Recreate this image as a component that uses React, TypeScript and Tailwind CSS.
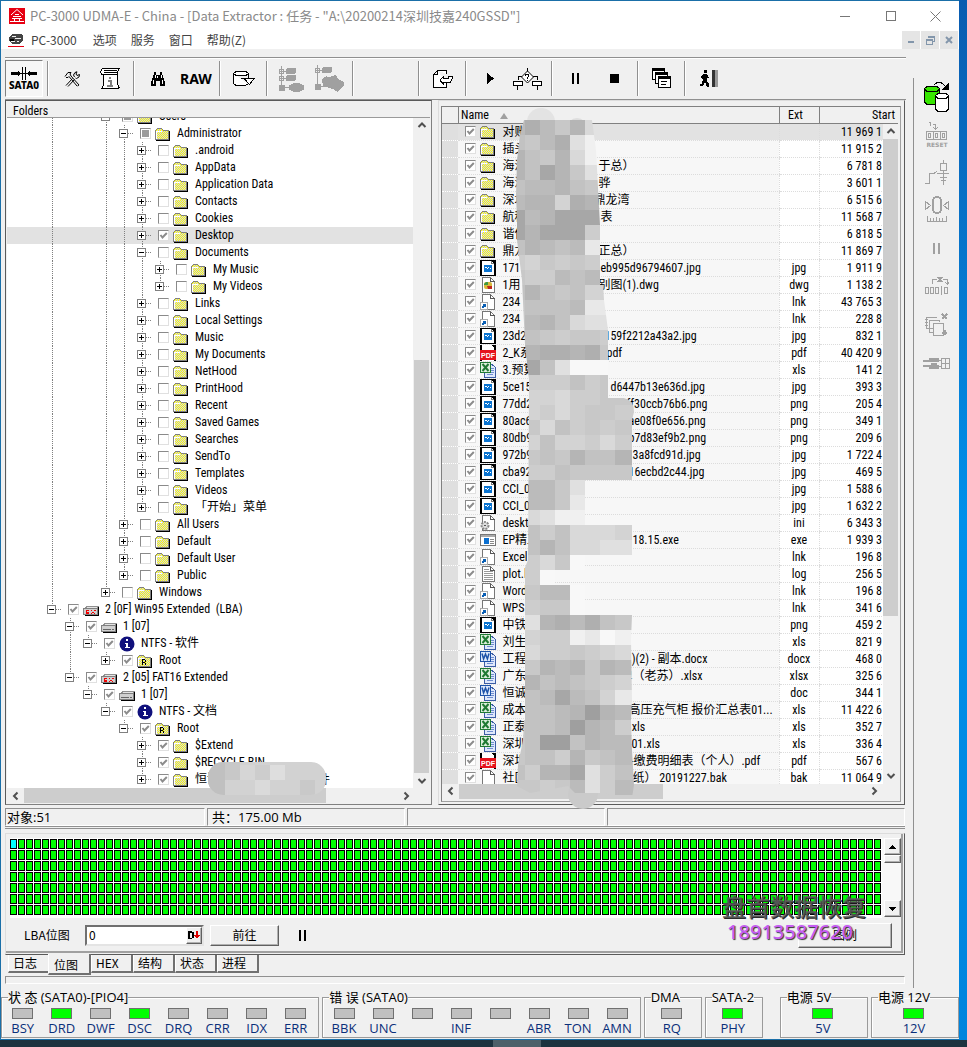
import React from 'react';
import clsx from 'clsx';

type TreeRow = { level: number; label: string; icon?: string; open?: boolean; check?: 'on' | 'mixed'; tail?: string };
type FileRow = { name: string; icon: string; ext?: string; start: string; tail?: string; lead?: number };

const listFont = "font-['Roboto_Condensed','Roboto','Noto_Sans_CJK_SC',sans-serif] text-xs";
const uiFont = "font-['Open_Sans','Noto_Sans_CJK_SC',sans-serif]";

const plain = (level: number, names: string[]): TreeRow[] => names.map((label) => ({ level, label }));

const tree: TreeRow[] = [
  { level: 3, label: 'Users', open: true, check: 'mixed' },
  { level: 4, label: 'Administrator', open: true, check: 'mixed' },
  ...plain(5, ['.android', 'AppData', 'Application Data', 'Contacts', 'Cookies']),
  { level: 5, label: 'Desktop', check: 'on' },
  { level: 5, label: 'Documents', open: true },
  ...plain(6, ['My Music', 'My Videos']),
  ...plain(5, ['Links', 'Local Settings', 'Music', 'My Documents', 'NetHood', 'PrintHood', 'Recent', 'Saved Games', 'Searches', 'SendTo', 'Templates', 'Videos', '「开始」菜单']),
  ...plain(4, ['All Users', 'Default', 'Default User', 'Public']),
  { level: 3, label: 'Windows' },
  { level: 0, label: '2 [0F] Win95 Extended  (LBA)', icon: 'ex', open: true, check: 'on' },
  { level: 1, label: '1 [07]', icon: 'drive', open: true, check: 'on' },
  { level: 2, label: 'NTFS - 软件', icon: 'info', open: true, check: 'on' },
  { level: 3, label: 'Root', icon: 'root', check: 'on' },
  { level: 1, label: '2 [05] FAT16 Extended', icon: 'ex', open: true, check: 'on' },
  { level: 2, label: '1 [07]', icon: 'drive', open: true, check: 'on' },
  { level: 3, label: 'NTFS - 文档', icon: 'info', open: true, check: 'on' },
  { level: 4, label: 'Root', icon: 'root', open: true, check: 'on' },
  { level: 5, label: '$Extend', check: 'on' },
  { level: 5, label: '$RECYCLE.BIN', check: 'on' },
  { level: 5, label: '恒诚', check: 'on', tail: '件' },
];

const files: FileRow[] = [
  { name: '对账', icon: 'folder', start: '11 969 1' },
  { name: '插头', icon: 'folder', start: '11 915 2' },
  { name: '海汇', icon: 'folder', start: '6 781 8', tail: '于总）', lead: 96 },
  { name: '海汇', icon: 'folder', start: '3 601 1', tail: '骅', lead: 96 },
  { name: '深圳', icon: 'folder', start: '6 515 6', tail: '鼎龙湾', lead: 91 },
  { name: '航科', icon: 'folder', start: '11 568 7', tail: '表', lead: 98 },
  { name: '谐信', icon: 'folder', start: '6 818 5' },
  { name: '鼎龙', icon: 'folder', start: '11 869 7', tail: '正总）', lead: 96 },
  { name: '171', icon: 'img', ext: 'jpg', start: '1 911 9', tail: 'eb995d96794607.jpg', lead: 98 },
  { name: '1用', icon: 'dwg', ext: 'dwg', start: '1 138 2', tail: '别图(1).dwg', lead: 96 },
  { name: '234', icon: 'lnk', ext: 'lnk', start: '43 765 3' },
  { name: '234', icon: 'lnk', ext: 'lnk', start: '228 8' },
  { name: '23d2', icon: 'img', ext: 'jpg', start: '832 1', tail: '159f2212a43a2.jpg', lead: 102 },
  { name: '2_K系', icon: 'pdf', ext: 'pdf', start: '40 420 9', tail: 'pdf', lead: 104 },
  { name: '3.预算', icon: 'xls', ext: 'xls', start: '141 2' },
  { name: '5ce15', icon: 'img', ext: 'jpg', start: '393 3', tail: 'd6447b13e636d.jpg', lead: 108 },
  { name: '77dd2', icon: 'img', ext: 'png', start: '205 4', tail: 'ff30ccb76b6.png', lead: 124 },
  { name: '80ac6', icon: 'img', ext: 'png', start: '349 1', tail: 'ae08f0e656.png', lead: 126 },
  { name: '80db9', icon: 'img', ext: 'png', start: '209 6', tail: 'b7d83ef9b2.png', lead: 126 },
  { name: '972b9', icon: 'img', ext: 'jpg', start: '1 722 4', tail: '3a8fcd91d.jpg', lead: 130 },
  { name: 'cba92', icon: 'img', ext: 'jpg', start: '469 5', tail: '16ecbd2c44.jpg', lead: 126 },
  { name: 'CCI_0', icon: 'img', ext: 'jpg', start: '1 588 6' },
  { name: 'CCI_0', icon: 'img', ext: 'jpg', start: '1 632 2' },
  { name: 'deskto', icon: 'ini', ext: 'ini', start: '6 343 3' },
  { name: 'EP精工', icon: 'exe', ext: 'exe', start: '1 939 3', tail: '18.15.exe', lead: 130 },
  { name: 'Excel', icon: 'lnk', ext: 'lnk', start: '196 8' },
  { name: 'plot.lo', icon: 'log', ext: 'log', start: '256 5' },
  { name: 'Word', icon: 'lnk', ext: 'lnk', start: '196 8' },
  { name: 'WPS', icon: 'lnk', ext: 'lnk', start: '341 6' },
  { name: '中铁', icon: 'img', ext: 'png', start: '459 2' },
  { name: '刘生', icon: 'xls', ext: 'xls', start: '821 9' },
  { name: '工程', icon: 'doc', ext: 'docx', start: '468 0', tail: '.)(2) - 副本.docx', lead: 126 },
  { name: '广东', icon: 'xls', ext: 'xlsx', start: '325 6', tail: '单（老苏）.xlsx', lead: 118 },
  { name: '恒诚', icon: 'doc', ext: 'doc', start: '344 1' },
  { name: '成本', icon: 'xls', ext: 'xls', start: '11 422 6', tail: '高压充气柜 报价汇总表01...', lead: 126 },
  { name: '正泰', icon: 'xls', ext: 'xls', start: '352 7', tail: '.xls', lead: 126 },
  { name: '深圳', icon: 'xls', ext: 'xls', start: '336 4', tail: '-01.xls', lead: 126 },
  { name: '深圳', icon: 'pdf', ext: 'pdf', start: '567 6', tail: '-缴费明细表（个人）.pdf', lead: 128 },
  { name: '社区', icon: 'file', ext: 'bak', start: '11 064 9', tail: '纸） 20191227.bak', lead: 130 },
];

const Svg = ({ w, h, children, className }: { w: number; h: number; children: React.ReactNode; className?: string }) => (
  <svg width={w} height={h} viewBox={`0 0 ${w} ${h}`} shapeRendering="crispEdges" fill="none" className={clsx('shrink-0', className)} aria-hidden>
    {children}
  </svg>
);

const Page = () => (
  <>
    <path d="M2.5 .5H10.5L14.5 4.5V15.5H2.5Z" fill="#fff" stroke="#777" />
    <path d="M10.5 .5V4.5H14.5" stroke="#555" />
  </>
);

const OfficeIcon = ({ main, tint, mark }: { main: string; tint: string; mark: 'x' | 'w' }) => (
  <Svg w={16} h={16}>
    <path d="M6.5 2.5H12L15.5 5.5V15.5H4.5V2.5" fill="#dfe8fb" stroke="#3b5da5" />
    <path d="M7 12.5H13M11 6.5H14M11 8.5H14M11 10.5H14" stroke="#6f8fd0" />
    <rect x="0.5" y="0.5" width="10" height="10" fill={tint} stroke={main} />
    {mark === 'x' ? (
      <path d="M2.5 2L8.5 9M8.5 2L2.5 9" stroke={main} strokeWidth="2" shapeRendering="auto" />
    ) : (
      <path d="M2 2.5L3.6 8L5.5 3L7.4 8L9 2.5" stroke={main} strokeWidth="1.5" shapeRendering="auto" />
    )}
  </Svg>
);

const FileIcon = ({ kind }: { kind: string }) => {
  switch (kind) {
    case 'img':
      return (
        <Svg w={16} h={16}>
          <rect width="16" height="16" fill="#000" />
          <path d="M2 1H11L14 4V15H2Z" fill="#fff" />
          <path d="M11.5 1V3.5H14" stroke="#777" />
          <rect x="4" y="5" width="8" height="7" fill="#0b74d1" />
          <path d="M5 7.5H7M7.5 8V9M8 7.5H9M10.5 8V9" stroke="#fff" />
        </Svg>
      );
    case 'dwg':
      return (
        <Svg w={16} h={16}>
          <Page />
          <rect x="4" y="5" width="8" height="7" rx="2" fill="#d8b83a" shapeRendering="auto" />
          <path d="M7 9H12V12H8Z" fill="#c0281c" shapeRendering="auto" />
          <path d="M4 7L6 5H8V8H4Z" fill="#3f9a3f" shapeRendering="auto" />
        </Svg>
      );
    case 'lnk':
      return (
        <Svg w={16} h={16}>
          <Page />
          <rect x="0.5" y="8.5" width="7" height="7" fill="#fff" stroke="#aaa" />
          <path d="M2 14L5.5 10.5M3 10.5H5.5V13" stroke="#0a5fb4" strokeWidth="1.5" />
        </Svg>
      );
    case 'pdf':
      return (
        <Svg w={16} h={16}>
          <rect width="16" height="16" fill="#000" />
          <path d="M2 0H11L14 3V16H2Z" fill="#fff" />
          <rect y="5" width="16" height="10" fill="#e5131d" />
          <text x="8" y="13" textAnchor="middle" fontSize="7" fontWeight="700" fontFamily="Liberation Sans, sans-serif" fill="#fff">PDF</text>
        </Svg>
      );
    case 'xls':
      return <OfficeIcon main="#1f7a33" tint="#dcefdc" mark="x" />;
    case 'doc':
      return <OfficeIcon main="#1d52a8" tint="#dbe7fa" mark="w" />;
    case 'ini':
      return (
        <Svg w={16} h={16}>
          <Page />
          <circle cx="5" cy="10.5" r="3.5" stroke="#888" strokeWidth="2" strokeDasharray="2 1" fill="#ddd" shapeRendering="auto" />
          <circle cx="5" cy="10.5" r="1" fill="#555" />
        </Svg>
      );
    case 'exe':
      return (
        <Svg w={16} h={16}>
          <rect x="0.5" y="2.5" width="15" height="11" fill="#fff" stroke="#777" />
          <path d="M1 4H15" stroke="#aaa" strokeWidth="2" />
          <rect x="4" y="6" width="5" height="6" fill="#0b6fd0" />
          <path d="M10 7.5H14M10 9.5H14M10 11.5H14" stroke="#888" />
        </Svg>
      );
    case 'log':
      return (
        <Svg w={16} h={16}>
          <Page />
          <path d="M4 3.5H9M4 5.5H13M4 7.5H13M4 9.5H13M4 11.5H13M4 13.5H13" stroke="#999" />
        </Svg>
      );
    case 'file':
      return <Svg w={16} h={16}><Page /></Svg>;
    case 'ex':
    case 'drive':
      return (
        <Svg w={16} h={16}>
          <path d="M1.5 7L4 4.5H15L13.5 7" fill="#e4e4e4" stroke="#909090" />
          <rect x="0.5" y="6.5" width="14" height="6" fill="#d0d0d0" stroke="#808080" />
          <path d="M2 13.5H15.5V5" stroke="#000" />
          {kind === 'ex' ? (
            <path d="M3.5 8V12M4 8.5H6M4 10H6M4 11.5H6M8 8V9M9 9.5V10.5M8 11V12M11 8V9M10 9.5V10.5M11 11V12M12.5 8V9" stroke="#f00000" />
          ) : (
            <path d="M2 10.5H10M11 10.5H13" stroke="#666" />
          )}
        </Svg>
      );
    case 'info':
      return (
        <Svg w={16} h={16}>
          <circle cx="8" cy="8" r="7.5" fill="#10107c" shapeRendering="auto" />
          <path d="M7 3H9V5H7ZM6 7H9V11H11V12H6V11H7V8H6Z" fill="#fff" />
        </Svg>
      );
    default:
      return (
        <Svg w={16} h={16}>
          <defs>
            <pattern id="dither" width="2" height="2" patternUnits="userSpaceOnUse">
              <rect width="2" height="2" fill="#ff0" />
              <rect width="1" height="1" fill="#ccccf4" />
              <rect x="1" y="1" width="1" height="1" fill="#ccccf4" />
            </pattern>
          </defs>
          <path d="M0.5 13.5V4.5L2.5 2.5H6.5L8.5 4.5H13.5V13.5Z" fill="url(#dither)" stroke="#808080" />
          <path d="M1 5.5H7M1.5 5V13" stroke="#fff" />
          <path d="M1 14.5H14.5V5" stroke="#000" />
          {kind === 'root' && <path d="M5.5 12V6M6 6.5H8M6 9.5H8M8.5 7V9M8.5 10V12" stroke="#000" />}
        </Svg>
      );
  }
};

const Check = ({ state, label }: { state?: 'on' | 'mixed'; label: string }) => (
  <span className="relative inline-flex h-[11px] w-[11px] shrink-0">
    <input
      type="checkbox"
      aria-label={label}
      defaultChecked={state === 'on'}
      className="peer h-[11px] w-[11px] appearance-none border border-t-[#8a8a8a] border-r-[#e0e0e0] border-b-[#e0e0e0] border-l-[#8a8a8a] bg-white"
    />
    {state === 'mixed' && <span className="pointer-events-none absolute inset-[2px] bg-[#9a9a9a]" />}
    <svg viewBox="0 0 11 11" className="pointer-events-none absolute inset-0 hidden peer-checked:block" fill="none" aria-hidden>
      <path d="M2.5 5L4.5 7.5L8.8 3" stroke="#8c8c8c" strokeWidth="2" />
    </svg>
  </span>
);

const hasNext = (index: number, level: number) => {
  for (let i = index + 1; i < tree.length; i++) {
    if (tree[i].level < level) return false;
    if (tree[i].level === level) return true;
  }
  return false;
};

const TreeItem = ({ row, index }: { row: TreeRow; index: number }) => (
  <li className={clsx('flex h-[17px] items-center pl-[35px]', row.label === 'Desktop' && 'bg-[#e2e2e2]')}>
    {Array.from({ length: row.level }, (_, k) => (
      <span key={k} className="flex h-full w-[18px] shrink-0 pl-[10px]">
        {hasNext(index, k) && <span className="border-l border-dotted border-[#808080]" />}
      </span>
    ))}
    <button aria-label={`Toggle ${row.label}`} className="h-[17px] w-[26px] shrink-0">
      <Svg w={26} h={17}>
        <path d={hasNext(index, row.level) ? 'M10.5 0V17' : 'M10.5 0V8'} stroke="#808080" strokeDasharray="1 1" />
        <path d="M14 8.5H20" stroke="#808080" strokeDasharray="1 1" />
        <rect x="5.5" y="4.5" width="8" height="8" fill="#fff" stroke="#808080" />
        <path d={row.open ? 'M7 8.5H12' : 'M7 8.5H12M9.5 6V11'} stroke="#000" />
      </Svg>
    </button>
    <Check state={row.check} label={row.label} />
    <span className="ml-1 flex w-[22px] shrink-0 items-center"><FileIcon kind={row.icon ?? 'folder'} /></span>
    <span className={clsx('pb-px leading-4 whitespace-pre', row.tail && 'w-[123px]')}>{row.label}</span>
    {row.tail}
  </li>
);

const Arrow = ({ dir }: { dir: 'up' | 'down' | 'left' | 'right' }) => {
  const d = { up: 'M1.5 6L5 2.5L8.5 6', down: 'M1.5 3L5 6.5L8.5 3', left: 'M6.5 1.5L3 5L6.5 8.5', right: 'M3.5 1.5L7 5L3.5 8.5' }[dir];
  return (
    <svg width="10" height="10" fill="none" aria-hidden><path d={d} stroke="#505050" strokeWidth="2" /></svg>
  );
};

const scrollButton = 'flex h-[15px] w-[17px] shrink-0 items-center justify-center';

// one shade letter per 15px block, '.' leaves the block out
const shades: Record<string, string> = {
  a: '#9f9f9f', b: '#a7a7a7', c: '#afafaf', d: '#b5b5b5', e: '#bbbbbb', f: '#c2c2c2', g: '#c8c8c8',
  h: '#cdcdcd', i: '#d3d3d3', j: '#d9d9d9', k: '#e0e0e0', l: '#e8e8e8', m: '#f0f0f0', n: '#f8f8f8',
};
const blocks = [
  'ecegdj', 'fgeckm', 'dfgdjm', 'dfbdgk', 'feedfg', 'eddicd', 'bedbbb', 'bdbbbh', 'fdefel', 'highgh',
  'ghhefe', 'fdfgfii', 'gfffell', 'gedfjkk', 'gfghggh', 'edccdcg', '.bfknnn', '.hhhfhg', '.iijhhgg', '.ihjhggh',
  '.gjfhghg', '.ifiihjh', '.gfgdffd', '.hhfgggg', '.eegk', '.eegl', '.jkmm', '.fhfjjji', '.fdfjjkk', '.hjgn',
  '.hn', '.geen', '.hggn', '.kdcecfg', '.ihhmlnm', '.jhhghij', '.gdedgde', '.dfefghi', '.febefil', '.ffedade',
  'gffeadeh', 'gfaafdee', 'gffhdgfe', 'fhddbkhf', 'gghgekhe',
];

const ListBlur = () => (
  <svg viewBox="510 105 130 705" width="130" height="705" className="pointer-events-none absolute top-[-2px] left-[68px]" aria-hidden>
    <defs>
      <clipPath id="smear">
        <path d="M524 120H592L596 150L600 225L604 300L608 330V398H624Q634 400 634 412L632 420V525H632V615L631 640L632 700L631 720L632 750L634 785L632 798Q618 804 606 793H575L568 786L530 793L517 786L518 765L523 740L525 700L524 570L528 560L529 380L525 345L522 280L517 240L517 220L516 195L517 160L520 135Z" />
      </clipPath>
    </defs>
    <circle cx="541" cy="122" r="14" fill="#e3e3e3" />
    <circle cx="577" cy="128" r="10" fill="#dedede" />
    <circle cx="583" cy="794" r="15" fill="#cacaca" />
    <g clipPath="url(#smear)" shapeRendering="crispEdges">
      {blocks.map((line, r) =>
        line.split('').map((c, i) => c !== '.' && (
          <rect key={`${r}-${i}`} x={510 + i * 15} y={120 + r * 15} width={i === 7 ? 20 : 15} height="15" fill={shades[c]} />
        ))
      )}
    </g>
  </svg>
);

const FoldersPanel = () => (
  <section className={clsx('flex min-w-0 flex-col border border-t-[#5a5a5a] border-r-[#808080] border-b-[#808080] border-l-[#5a5a5a] bg-[#f0f0f0] p-px', listFont)}>
    <h2 className="h-[16px] border-b border-[#9a9a9a] pl-[6px] leading-[18px]">Folders</h2>
    <div className="relative flex">
      <div className="min-w-0 flex-1 overflow-hidden bg-white">
        <ul className="-mt-[10px]">
          {tree.map((row, i) => <TreeItem key={i} row={row} index={i} />)}
        </ul>
      </div>
      <div className="flex w-[17px] flex-col items-center justify-between">
        <button aria-label="Scroll up" className={scrollButton}><Arrow dir="up" /></button>
        <span className="mt-[227px] w-[15px] flex-1 bg-[#cdcdcd]" />
        <button aria-label="Scroll down" className={scrollButton}><Arrow dir="down" /></button>
      </div>
      <svg width="120" height="34" className="pointer-events-none absolute bottom-[-8px] left-[201px]" aria-hidden>
        <clipPath id="pill"><rect width="118" height="33" rx="15" /></clipPath>
        <g clipPath="url(#pill)">
          <rect width="120" height="34" fill="#d2d2d2" />
          <rect width="17" height="34" fill="#c0c0c0" />
          <rect x="17" width="15" height="18" fill="#c8c8c8" />
          <rect x="32" y="3" width="15" height="15" fill="#d6d6d6" />
          <rect x="47" y="3" width="15" height="15" fill="#cdcdcd" />
          <rect x="62" y="3" width="15" height="15" fill="#dedede" />
          <rect x="47" y="18" width="15" height="15" fill="#dadada" />
          <rect x="92" y="18" width="15" height="15" fill="#c9c9c9" />
        </g>
      </svg>
    </div>
    <div className="flex h-[15px] items-center pr-4">
      <button aria-label="Scroll left" className={scrollButton}><Arrow dir="left" /></button>
      <span className="h-[15px] w-[302px] bg-[#cdcdcd]" />
      <span className="flex-1" />
      <button aria-label="Scroll right" className={scrollButton}><Arrow dir="right" /></button>
    </div>
  </section>
);

const FilesPanel = () => (
  <section className={clsx('min-w-0 border border-t-[#dcdcdc] border-r-[#5a5a5a] border-b-[#5a5a5a] border-l-[#dcdcdc] pt-[5px] pr-[3px] pb-px pl-[2px]', listFont)}>
    <div className="relative border border-t-[#808080] border-r-[#a0a0a0] border-b-[#a0a0a0] border-l-[#808080] pr-[2px]">
      <div className="relative overflow-hidden">
        <table className="-mb-[3px] w-full table-fixed border-collapse">
          <colgroup>
            <col className="w-[16px]" />
            <col />
            <col className="w-[40px]" />
            <col className="w-[79px]" />
          </colgroup>
          <thead>
            <tr className="h-[16px] border-b border-[#808080] leading-[13px]">
              <th className="border-r border-[#808080] p-0" />
              <th className="border-r border-[#808080] p-0 pt-[2px] pl-[2px] text-left font-normal">
                Name <span className="ml-2 inline-block border-x-4 border-b-[6px] border-x-transparent border-b-[#a0a0a0]" />
              </th>
              <th className="border-r border-[#808080] p-0 pt-[2px] pr-[7px] text-center font-normal">Ext</th>
              <th className="p-0 pt-[2px] pr-[3px] text-right font-normal">Start</th>
            </tr>
          </thead>
          <tbody>
            {files.map((f, i) => {
              const cell = clsx('border-b border-dotted border-[#dcdcdc] p-0 leading-[16px]', i === 0 ? 'bg-[#e2e2e2]' : 'bg-white');
              return (
                <tr key={i} className="h-[17px]">
                  <td className="border-b border-dotted border-white bg-[#dfdfdf] p-0" />
                  <td className={clsx('border-b border-dotted border-[#dcdcdc] p-0', i === 0 ? 'bg-[#e2e2e2]' : 'bg-[#f7f7f7]')}>
                    <div className="flex h-[16px] items-center overflow-hidden pl-[7px] leading-[16px] whitespace-nowrap">
                      <Check state="on" label={f.name} />
                      <span className="ml-1 flex w-[22px] shrink-0"><FileIcon kind={f.icon} /></span>
                      <span className="shrink-0" style={{ width: f.lead }}>{f.name}</span>
                      {f.tail && <span>{f.tail}</span>}
                    </div>
                  </td>
                  <td className={clsx(cell, 'border-l text-center')}>{f.ext}</td>
                  <td className={clsx(cell, 'border-l pr-4 text-right')}>{f.start}</td>
                </tr>
              );
            })}
          </tbody>
        </table>
        <div className="absolute top-[17px] right-0 bottom-0 flex w-[15px] flex-col items-center bg-[#f0f0f0]">
          <button aria-label="Scroll up" className={scrollButton}><Arrow dir="up" /></button>
          <span className="mb-[153px] w-[15px] flex-1 bg-[#cdcdcd]" />
          <button aria-label="Scroll down" className={scrollButton}><Arrow dir="down" /></button>
        </div>
      </div>
      <div className="flex h-[17px] items-start pr-4">
        <button aria-label="Scroll left" className={scrollButton}><Arrow dir="left" /></button>
        <span className="h-[15px] w-[204px] bg-[#cdcdcd]" />
        <span className="flex-1" />
        <button aria-label="Scroll right" className={scrollButton}><Arrow dir="right" /></button>
      </div>
      <ListBlur />
    </div>
  </section>
);

const Sep = () => <span className="mx-1 my-px w-[2px] shrink-0 border-r border-l border-r-white border-l-[#909090]" />;

const Tool = ({ label, narrow, pressed, children }: { label: string; narrow?: boolean; pressed?: boolean; children: React.ReactNode }) => (
  <button
    aria-label={label}
    className={clsx(
      'flex shrink-0 flex-col items-center justify-center',
      narrow ? 'w-[37px]' : 'w-[38px]',
      pressed && 'border border-t-[#808080] border-r-white border-b-white border-l-[#808080] bg-[#f6f6f6]'
    )}
  >
    {children}
  </button>
);

const Toolbar = () => (
  <div className="mr-[7px] ml-1 flex h-[43px] border-t border-b border-[#909090] py-[2px] shadow-[inset_0_1px_0_white]">
    <Tool label="SATA0" pressed>
      <Svg w={26} h={13}>
        <path d="M0 6.5H9M17 6.5H26" stroke="#000" strokeWidth="3" />
        <path d="M8 6.5H18M11.5 0V13M14.5 0V13" stroke="#000" />
        <path d="M7.5 4V9M18.5 4V9" stroke="#000" />
      </Svg>
      <span className="font-['Noto_Sans',sans-serif] text-[10px] leading-[11px] font-extrabold">SATA0</span>
    </Tool>
    <Sep />
    <Tool label="Tools">
      <Svg w={16} h={16}>
        <path d="M1 5.5L4 1.5H7L6 3L7 5L15 14M2 6.500H4L5 5.500L13 15M15 14L13.500 15" stroke="#000" shapeRendering="auto" />
        <path d="M10.500 6L9.500 4L11 1.500L13 .8L12 3L13 4.500L15.500 3.500L15 6L12.500 7.500L11.500 7M8.500 7.500L2 14.500M10.500 8.500L4 15.500" stroke="#000" shapeRendering="auto" />
      </Svg>
    </Tool>
    <Tool label="Script">
      <Svg w={22} h={23}>
        <path d="M3.500 1.500H20.500L18.500 4.500V17.500L20.500 20.500L18.500 21.500H2.500L4.500 18.500V7.500H2.500L1.500 4.500ZM5 3.500H18M5 5.500H18M4 7.500H18" fill="#fff" stroke="#000" />
        <path d="M9 14H12V18M8 19H14M10 11H12" stroke="#808080" strokeWidth="2" />
      </Svg>
    </Tool>
    <Sep />
    <Tool label="Search">
      <Svg w={16} h={14}>
        <path d="M4 0H6V3H10V0H12V3H13V6H14V9H15V14H10V9H6V14H1V9H2V6H3V3H4Z" fill="#000" />
        <path d="M7.500 4V6M3.500 8V12M12.500 8V12M5.500 3V6M11.500 3V6" stroke="#fff" />
      </Svg>
    </Tool>
    <Tool label="Raw recovery">
      <span className="font-['Noto_Sans',sans-serif] text-sm leading-4 font-bold">RAW</span>
    </Tool>
    <Sep />
    <Tool label="Disk" narrow>
      <Svg w={22} h={17}>
        <path d="M.5 3.500L3 1.500H13L15.500 3.500L13 5.500H3ZM.5 3.500V13.500L3 15.500H10L15.500 14.500M15.500 3.500V8" fill="#fff" stroke="#000" />
        <path d="M11 8.500H21L16.500 14.500ZM8 8.500H11" fill="#fff" stroke="#000" />
      </Svg>
    </Tool>
    <Sep />
    <Tool label="Map tree">
      <Svg w={27} h={26}>
        <path d="M3.500 0V22M1 5.500H9M1 12.500H9M6 21.500H12" stroke="#a0a0a0" />
        <rect x="1.500" y="3.500" width="4" height="4" stroke="#a0a0a0" />
        <rect x="1.500" y="10.500" width="4" height="4" stroke="#a0a0a0" />
        <rect x="8" y="2" width="10" height="6" rx="2" fill="#a0a0a0" />
        <rect x="8" y="9" width="10" height="6" rx="2" fill="#a0a0a0" />
        <circle cx="4" cy="22" r="3.500" fill="#a0a0a0" />
        <ellipse cx="18.500" cy="21.500" rx="8" ry="4.500" fill="#a0a0a0" />
      </Svg>
    </Tool>
    <Tool label="Fragment tree">
      <Svg w={31} h={28}>
        <path d="M3.500 0V22M1 5.500H9M6 21.500H12" stroke="#a0a0a0" />
        <rect x="1.500" y="3.500" width="4" height="4" stroke="#a0a0a0" />
        <rect x="8" y="2" width="10" height="6" rx="2" fill="#a0a0a0" />
        <circle cx="4" cy="22" r="3.500" fill="#a0a0a0" />
        <path d="M8 15Q10 10 15 12L22 10L24 14L30 17V21L26 24L24 27L19 24L9 21Z" fill="#a0a0a0" />
      </Svg>
    </Tool>
    <Sep />
    <span className="w-14 shrink-0" />
    <Sep />
    <Tool label="Export" narrow>
      <Svg w={20} h={18}>
        <path d="M4.500 .5H13.500V4M13.500 13V17.500H.5V4.500H4.500V.5M.5 4.500L4.500 .5" fill="#fff" stroke="#000" />
        <path d="M7.500 9.500L10.500 6.500V8.500H15.500V6.500H19.500V8.500L17 12.500H10.500V14L7.500 11Z" fill="#fff" stroke="#000" />
      </Svg>
    </Tool>
    <Sep />
    <Tool label="Start">
      <Svg w={7} h={11}><path d="M0 0L7 5.500L0 11Z" fill="#000" /></Svg>
    </Tool>
    <Tool label="Conditions">
      <Svg w={30} h={22}>
        <path d="M14.500 0V4M5.500 12V8.500H9M24.500 12V8.500H20M4.500 18V22M24.500 18V22" stroke="#000" />
        <path d="M14.500 3L20.500 9L14.500 15L8.500 9Z" fill="#fff" stroke="#000" shapeRendering="auto" />
        <path d="M12.500 7.500V6.500H15.500V8.500L14.500 9.500V10.500M14.500 12V13" stroke="#000" />
        <rect x="0.500" y="13.500" width="9" height="4" fill="#fff" stroke="#000" />
        <rect x="19.500" y="13.500" width="9" height="4" fill="#fff" stroke="#000" />
      </Svg>
    </Tool>
    <Sep />
    <Tool label="Pause">
      <Svg w={8} h={11}><path d="M0 0H2V11H0ZM5 0H7V11H5Z" fill="#000" /></Svg>
    </Tool>
    <Tool label="Stop">
      <Svg w={9} h={9}><rect width="9" height="9" fill="#000" /></Svg>
    </Tool>
    <Sep />
    <Tool label="Windows" narrow>
      <Svg w={20} h={21}>
        {[0, 1, 2].map((n) => (
          <g key={n} transform={`translate(${n * 3} ${n * 4})`}>
            <rect x="0.500" y="0.500" width="12" height="11" fill="#fff" stroke="#000" />
            <path d="M1 2H12" stroke="#000" strokeWidth="2" />
          </g>
        ))}
        <path d="M9 13.500H15M9 16.500H14" stroke="#000" />
      </Svg>
    </Tool>
    <Sep />
    <Tool label="Exit">
      <Svg w={19} h={18}>
        <path d="M4 0H7V3H4ZM3 4H7L9 8H7V11L9 14V17H7L5 12L3 16H0V14H2L3 9L1 8V6Z" fill="#000" />
        <rect x="12" width="3" height="17" fill="#333" />
        <rect x="15" width="3" height="17" fill="#999" />
      </Svg>
    </Tool>
  </div>
);

const Sidebar = () => (
  <aside className="mt-[29px] flex w-[46px] shrink-0 flex-col items-center border-l border-[#909090] pt-[3px] text-[#a0a0a0]">
    <button aria-label="Copy task" className="h-[32px]">
      <Svg w={26} h={30}>
        <path d="M.5 6.500L3 4.500H13L15.500 6.500V20L13 22.500H3L.5 20Z" fill="#37e600" stroke="#000" />
        <path d="M.5 7L3 9.500H13L15.500 7" stroke="#000" />
        <path d="M11.500 13.500L14 11.500H22L24.500 13.500V27L22 29.500H14L11.500 27Z" fill="#fff" stroke="#000" />
        <path d="M11.500 14L14 16.500H22L24.500 14" stroke="#000" />
        <path d="M10 3L13 .5H17L21 4" stroke="#000" />
        <path d="M25 0V8H18Z" fill="#000" />
      </Svg>
    </button>
    <button aria-label="Reset" className="mt-[7px] h-[28px]">
      <Svg w={22} h={27}>
        <path d="M3 1.500H4.500V5M7 3.500H9.500V8M7.500 6.500L9.500 8.500L11.500 6.500" stroke="currentColor" />
        <path d="M.5 10V19M20.500 10V19M0 10.500H21M0 18.500H21M7 11V18M14 11V18" stroke="currentColor" />
        <path d="M2.500 12.500H4.500V16.500H2.500ZM9.500 12.500H11.500V16.500H9.500ZM16.500 12.500H18.500V16.500H16.500Z" stroke="currentColor" />
        <text x="11" y="26" fontSize="6" fontWeight="700" textAnchor="middle" fill="currentColor" fontFamily="DejaVu Sans, sans-serif">RESET</text>
      </Svg>
    </button>
    <button aria-label="Power" className="mt-[11px] h-[26px]">
      <Svg w={24} h={25}>
        <path d="M18.500 0V4M18.500 11V25M15.500 3.500H21.500V10.500H15.500ZM0 23.500H4.500V13.500H9L12 11M12 13.500H24M15 17.500H22M16 20.500H21" stroke="currentColor" />
      </Svg>
    </button>
    <button aria-label="Calibrate" className="mt-[10px] h-[28px]">
      <Svg w={24} h={27}>
        <rect x="8" y="1" width="8" height="16" rx="4" stroke="currentColor" strokeWidth="2" />
        <path d="M.5 5.500L5.500 9.500L.5 13.500ZM23.500 5.500L18.500 9.500L23.500 13.500Z" stroke="currentColor" />
        <path d="M2.500 20V25.500H21.500V20M5.500 22V25M8.500 22V25M11.500 21V25M14.500 22V25M17.500 22V25" stroke="currentColor" />
      </Svg>
    </button>
    <button aria-label="Suspend" className="mt-[19px] h-[12px]">
      <Svg w={7} h={11}><path d="M1 0V11M6 0V11" stroke="currentColor" strokeWidth="2" /></Svg>
    </button>
    <button aria-label="Clear chain" className="mt-[21px] h-[20px]">
      <Svg w={24} h={19}>
        <path d="M7.500 8V3.500H12M18 3.500H22.500V8M20 6L22.500 8.500L24 6" stroke="currentColor" />
        <path d="M13 1L17 6M17 1L13 6" stroke="currentColor" strokeWidth="2" />
        <path d="M.5 11.500H3.500V17.500H.5ZM5.500 11.500H8.500V17.500H5.500ZM10.500 11.500H13.500V17.500H10.500ZM16.500 10V19M19.500 11.500H22.500V17.500H19.500Z" stroke="currentColor" />
      </Svg>
    </button>
    <button aria-label="Remove copies" className="mt-[18px] h-[24px]">
      <Svg w={24} h={24}>
        <path d="M8 15.500H1.500V4.500H11.500M8 19.500H4.500V7.500H14.500V9M8.500 10.500H18.500V22.500H8.500Z" stroke="currentColor" />
        <path d="M17 1L22 6M22 1L17 6" stroke="currentColor" strokeWidth="2" />
        <path d="M17 19.500H22M20 17V22" stroke="currentColor" strokeWidth="2" />
        <path d="M0 6.500H3M0 9.500H3M0 12.500H3" stroke="currentColor" />
      </Svg>
    </button>
    <button aria-label="Connector" className="mt-[19px] h-[14px]">
      <Svg w={27} h={13}>
        <path d="M0 4H16M0 9H16" stroke="currentColor" strokeWidth="2" />
        <path d="M6 2H16M8 6.500H14M6 11H16" stroke="currentColor" strokeWidth="2" />
        <path d="M16 3.500H18M16 9.500H18M18 1.500H26.500V11.500H18ZM18 6.500H26M22.500 1V12" stroke="currentColor" />
      </Svg>
    </button>
  </aside>
);

const raised = 'border border-t-white border-r-[#606060] border-b-[#606060] border-l-white bg-[#f0f0f0] shadow-[inset_-1px_-1px_0_#b0b0b0]';

const MapPanel = () => (
  <section className="relative mt-1 border border-t-[#dcdcdc] border-r-[#5a5a5a] border-b-[#5a5a5a] border-l-[#dcdcdc] shadow-[inset_-1px_-1px_0_#f0f0f0,inset_-3px_-3px_0_#a0a0a0]">
    <div className="mt-1 mr-[3px] ml-1 flex">
      <svg className="h-[80px] min-w-0 flex-1 bg-white" shapeRendering="crispEdges" role="img" aria-label="Sector map">
        <defs>
          <pattern id="cells" width="8" height="11" patternUnits="userSpaceOnUse" y="1">
            <rect width="7" height="10" fill="#000" />
            <rect x="1" y="1" width="5" height="8" fill="#0f0" />
          </pattern>
        </defs>
        <rect y="1" width="100%" height="77" fill="url(#cells)" />
        <rect x="1" y="2" width="5" height="8" fill="#0ff" />
      </svg>
      <div className="flex h-[79px] w-[19px] flex-col bg-[#f8f8f8] pl-[2px]">
        <button aria-label="Scroll up" className={clsx('flex h-[17px] items-center justify-center', raised)}>
          <Svg w={7} h={4}><path d="M3 0H4V1H5V2H6V3H7V4H0V3H1V2H2V1H3Z" fill="#000" /></Svg>
        </button>
        <span className={clsx('h-2', raised)} />
        <span className="flex-1" />
        <button aria-label="Scroll down" className={clsx('flex h-[17px] items-center justify-center', raised)}>
          <Svg w={7} h={4}><path d="M0 0H7V1H6V2H5V3H4V4H3V3H2V2H1V1H0Z" fill="#000" /></Svg>
        </button>
      </div>
    </div>
    <div className="flex h-[36px] items-center pr-3 pb-[2px] pl-[18px] font-['Noto_Sans_CJK_SC',sans-serif] text-xs">
      <label htmlFor="lba" className="w-[61px]">LBA位图</label>
      <div className="flex h-[21px] w-[119px] border-2 border-t-[#707070] border-r-[#e4e4e4] border-b-[#e4e4e4] border-l-[#707070] bg-white">
        <input id="lba" defaultValue="0" className="min-w-0 flex-1 px-[2px] outline-none" />
        <button aria-label="Format" className={clsx('flex w-[16px] items-center justify-center', raised)}>
          <Svg w={12} h={8}>
            <path d="M1 0V8M2 .5H4M2 7.500H4M5 1V7" stroke="#000" strokeWidth="2" />
            <path d="M8 0H10V4H12L9 8L6 4H8Z" fill="#e00000" />
          </Svg>
        </button>
      </div>
      <button className={clsx('ml-[6px] h-[21px] w-[69px] leading-none', raised)}>前往</button>
      <button aria-label="Pause map" className="ml-5">
        <Svg w={7} h={11}><path d="M1 0V11M6 0V11" stroke="#000" strokeWidth="2" /></Svg>
      </button>
      <button className={clsx('ml-auto h-[25px] w-[94px] leading-none', raised)}>图例</button>
    </div>
    <div className="pointer-events-none absolute right-[38px] bottom-[11px] text-center font-['Noto_Sans','Noto_Sans_CJK_SC',sans-serif] leading-none">
      <p className="text-2xl leading-7 font-medium text-[#606060]/80 [text-shadow:1px_1px_0_#2c2c2c]">盘首数据恢复</p>
      <p className="pr-2 text-xl leading-[22px] font-medium text-[#c65cf2] [text-shadow:1px_1px_1px_#333]">18913587620</p>
    </div>
  </section>
);

const tabs = ['日志', '位图', 'HEX', '结构', '状态', '进程'];

const Tabs = () => (
  <div className="flex h-[20px] items-start pl-[3px] font-['Noto_Sans_CJK_SC',sans-serif] text-xs">
    {tabs.map((t, i) => (
      <button
        key={t}
        className={clsx(
          'border-b-2 border-l border-r-[#707070] border-b-[#707070] border-l-white text-left leading-none',
          i === 0 ? 'w-10' : 'border-r-2',
          t === '位图' ? 'relative -mt-px h-[21px] w-[43px] bg-[#f0f0f0] pt-[3px] pl-[5px]' : 'h-[18px] pl-1',
          i > 1 && 'w-[42px]'
        )}
      >
        {t}
      </button>
    ))}
  </div>
);

const Group = ({ title, leds, on = [], className }: { title: string; leds: string[]; on?: string[]; className?: string }) => (
  <fieldset className={clsx('flex h-[50px] min-w-0 justify-center border border-[#9a9a9a] p-0 pr-[2px] shadow-[inset_1px_1px_0_white]', className)}>
    <legend className="ml-[6px] leading-[18px] whitespace-nowrap">{title}</legend>
    {leds.map((led, i) => (
      <div key={i} className="flex w-[39px] flex-col items-center">
        <span className={clsx('mt-[2px] h-[11px] w-[21px] border border-[#707070]', on.includes(led) ? 'bg-[#0f0]' : 'bg-[#c0c0c0]')} />
        <span className="leading-[18px] text-[#0a2f7a]">{led}</span>
      </div>
    ))}
  </fieldset>
);

const panelCell = 'border border-t-[#909090] border-r-white border-b-white border-l-[#909090]';

const App = () => (
  <div className="bg-[#1c333f] text-black">
    <div className="flex bg-[#0078d7]">
      <div className="min-w-0 flex-1 border-t border-b border-l border-[#1a6fa8] bg-[#f0f0f0]">
        <header className="bg-white font-['Noto_Sans_CJK_SC',sans-serif] text-[#8a8a8a]">
          <div className="flex h-[30px] items-center pl-2">
            <Svg w={16} h={16}>
              <rect width="16" height="16" fill="#e60012" />
              <path d="M2 7L8 1.500L14 7" stroke="#fff" shapeRendering="auto" />
              <path d="M6 6.500H10M4 8.500H12M3 10.500H13M1 13.500H15M5.500 11V13M10.500 11V13" stroke="#fff" />
            </Svg>
            <h1 className="ml-[5px] flex-1 text-[13px] leading-5 whitespace-nowrap">PC-3000 UDMA-E - China - [Data Extractor : 任务 - "A:\20200214深圳技嘉240GSSD"]</h1>
            <div className="flex pr-px">
              <button aria-label="Minimize" className="flex w-[46px] items-center justify-center"><Svg w={10} h={10}><path d="M0 5.500H10" stroke="#777" /></Svg></button>
              <button aria-label="Maximize" className="flex w-[45px] items-center justify-center"><Svg w={10} h={10}><rect x="0.500" y="0.500" width="9" height="9" stroke="#777" /></Svg></button>
              <button aria-label="Close" className="flex w-[45px] items-center justify-center"><svg width="11" height="11" aria-hidden><path d="M.5 .5L10.500 10.500M10.500 .5L.5 10.500" stroke="#777" /></svg></button>
            </div>
          </div>
          <div className="flex h-[18px] items-center pl-[7px]">
            <Svg w={16} h={14}>
              <path d="M1 4L4 1H13L15 3V8L11 11H4L1 8Z" fill="#444" />
              <path d="M4 3.500H8M7 5.500H13M3 8.500H7M9 8.500H11" stroke="#eee" />
              <path d="M2 7H6" stroke="#000" strokeWidth="2" />
              <path d="M0 13.500H16" stroke="#e60012" />
            </Svg>
            <nav className="ml-[7px] flex flex-1 gap-[14px] text-xs leading-[18px] text-[#444]">
              <a href="#pc" className="pr-[2px]">PC-3000</a>
              <a href="#options">选项</a>
              <a href="#service">服务</a>
              <a href="#window">窗口</a>
              <a href="#help">帮助(Z)</a>
            </nav>
            <div className="flex gap-px pr-px">
              <button aria-label="Minimize child" className="flex h-[18px] w-[18px] items-center justify-center bg-[#e5e5e5]"><Svg w={8} h={8}><path d="M1 6H7" stroke="#8396ab" strokeWidth="2" /></Svg></button>
              <button aria-label="Restore child" className="flex h-[18px] w-[18px] items-center justify-center bg-[#e5e5e5]"><Svg w={9} h={9}><path d="M2.500 2V.5H8.500V5.500H6M.5 3.500H6.500V8.500H.5ZM0 4.500H6M2 1.500H8" stroke="#8396ab" /></Svg></button>
              <button aria-label="Close child" className="flex h-[18px] w-[18px] items-center justify-center bg-[#e5e5e5]"><svg width="8" height="8" aria-hidden><path d="M1 1L7 7M7 1L1 7" stroke="#8396ab" strokeWidth="2" /></svg></button>
            </div>
          </div>
        </header>

        <div className="flex">
          <main className="min-w-0 flex-1 pt-[8px]">
            <Toolbar />
            <div className="mr-[8px] ml-1">
              <div className="grid grid-cols-[427fr_466fr] gap-[6px]">
                <FoldersPanel />
                <FilesPanel />
              </div>
              <div className={clsx('mt-[3px] grid grid-cols-[200fr_198fr_198fr_298fr] gap-[2px] text-[13px] leading-[16px]', uiFont)}>
                <span className={clsx(panelCell, 'pl-px')}>对象:51</span>
                <span className={clsx(panelCell, 'pl-1')}>共：175.00 Mb</span>
                <span className={panelCell} />
                <span className={panelCell} />
              </div>
              <div className="h-[3px] border-y border-[#909090]" />
              <MapPanel />
              <Tabs />
              <div className={clsx(panelCell, 'mt-px mb-1 h-[8px]')} />
            </div>
          </main>
          <Sidebar />
        </div>

        <footer className={clsx('grid grid-cols-[318fr_318fr_58fr_72fr_88fr_88fr] gap-[3px] pb-px text-[13px]', uiFont)}>
          <Group title="状 态 (SATA0)-[PIO4]" leds={['BSY', 'DRD', 'DWF', 'DSC', 'DRQ', 'CRR', 'IDX', 'ERR']} on={['DRD', 'DSC']} />
          <Group title="错 误 (SATA0)" leds={['BBK', 'UNC', '', 'INF', '', 'ABR', 'TON', 'AMN']} />
          <Group title="DMA" leds={['RQ']} />
          <Group title="SATA-2" leds={['PHY']} on={['PHY']} className="mr-[14px]" />
          <Group title="电源 5V" leds={['5V']} on={['5V']} />
          <Group title="电源 12V" leds={['12V']} on={['12V']} />
        </footer>
      </div>
      <div className="w-[8px] bg-gradient-to-b from-[#0a5cb0] via-[#0090ea] to-[#0084dd]" />
    </div>
    <div className="flex h-2 justify-center pl-[66px]">
      <span className="w-12 bg-[#4d6069]" />
    </div>
  </div>
);

export default App;
